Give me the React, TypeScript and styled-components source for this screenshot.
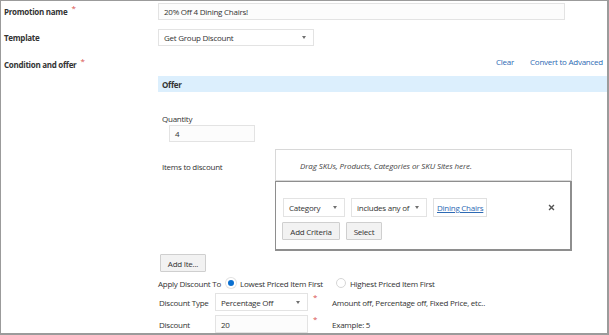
import React from "react";
import styled, { createGlobalStyle } from "styled-components";

const Global = createGlobalStyle`
  html, body { margin: 0; padding: 0; background: #fff; }
  body { font-family: "Open Sans", "Noto Sans", sans-serif; font-size: 8px; letter-spacing: -0.25px; color: #333; }
  * { box-sizing: border-box; }
`;

const Frame = styled.div`
  width: 609px;
  height: 335px;
  border: 1px solid #9b9b9b;
  border-right-width: 2px;
  border-bottom-width: 2px;
  overflow: hidden;
  padding: 2px 0 0 3px;
  display: flex;
  flex-direction: column;
`;

const FieldRow = styled.div<{ $mt?: number }>`
  display: grid;
  grid-template-columns: 154px 1fr;
  align-items: center;
  margin-top: ${(p) => p.$mt ?? 0}px;
`;

const Label = styled.div`
  font-weight: 700;
  font-size: 8px;
  letter-spacing: -0.28px;
  line-height: 12px;
  color: #333;
  white-space: nowrap;
`;

const Req = styled.span`
  color: #d9534f;
  font-weight: 400;
  font-size: 8px;
  position: relative;
  top: -4px;
  margin-left: 4px;
`;

const TextBox = styled.div<{ $w: number; $h?: number; $ml?: number }>`
  width: ${(p) => p.$w}px;
  height: ${(p) => p.$h ?? 17}px;
  margin-left: ${(p) => p.$ml ?? 0}px;
  border: 1px solid #e3e3e3;
  background: #fcfcfc;
  display: flex;
  align-items: center;
  padding-left: 5px;
  font-size: 8px;
  color: #333;
  white-space: nowrap;
  flex-shrink: 0;
`;

const Select = styled(TextBox)`
  justify-content: space-between;
  padding-right: 7px;
  background: #fff;
`;

const Caret = styled.span`
  width: 0;
  height: 0;
  border-left: 2.5px solid transparent;
  border-right: 2.5px solid transparent;
  border-top: 3.5px solid #707070;
  flex-shrink: 0;
`;

const ConditionRow = styled.div`
  display: grid;
  grid-template-columns: 154px 1fr;
  margin-top: 10px;
`;

const CondLabel = styled(Label)`
  padding-top: 3px;
`;

const Links = styled.div`
  display: flex;
  justify-content: flex-end;
  gap: 16px;
  padding-right: 4px;
  height: 12px;
  line-height: 12px;
  font-size: 8px;
`;

const Link = styled.a`
  color: #2d6ab4;
  text-decoration: none;
`;

const OfferBar = styled.div`
  margin-top: 8px;
  height: 16px;
  background: #dceffd;
  display: flex;
  align-items: center;
  padding-left: 4px;
  font-weight: 700;
  font-size: 8px;
`;

const OfferBody = styled.div`
  display: flex;
  flex-direction: column;
  align-items: flex-start;
`;

const SubLabel = styled.div<{ $ml?: number; $mt?: number }>`
  font-size: 8px;
  line-height: 12px;
  margin-left: ${(p) => p.$ml ?? 0}px;
  margin-top: ${(p) => p.$mt ?? 0}px;
  white-space: nowrap;
  color: #333;
`;

const ItemsGrid = styled.div`
  display: grid;
  grid-template-columns: 117px 297px;
  margin-top: 7px;
`;

const ItemsLabel = styled(SubLabel)`
  padding-top: 12px;
`;

const DropZone = styled.div`
  height: 32px;
  border: 1px solid #d8d8d8;
  display: flex;
  align-items: center;
  padding-left: 24px;
  font-style: italic;
  font-size: 8px;
  letter-spacing: -0.1px;
  color: #444;
`;

const CriteriaBox = styled.div`
  grid-column: 2;
  height: 70px;
  border: 1px solid #8e8e8e;
  border-width: 1px 2px 2px 1px;
  padding: 16px 0 0 7px;
  display: flex;
  flex-direction: column;
  gap: 5px;
`;

const CritRow = styled.div<{ $gap: number }>`
  display: flex;
  align-items: center;
  gap: ${(p) => p.$gap}px;
`;

const Chip = styled.div`
  height: 19px;
  border: 1px solid #e0e0e0;
  padding: 0 3px 0 3px;
  display: flex;
  align-items: center;
  font-size: 8px;
`;

const ChipLink = styled.span`
  color: #2d6ab4;
  text-decoration: underline;
`;

const Close = styled.svg`
  margin-left: auto;
  margin-right: 15px;
  width: 7px;
  height: 7px;
`;

const Button = styled.button<{ $w: number; $ml?: number; $mt?: number }>`
  width: ${(p) => p.$w}px;
  height: 18px;
  margin-left: ${(p) => p.$ml ?? 0}px;
  margin-top: ${(p) => p.$mt ?? 0}px;
  border: 1px solid #cfcfcf;
  border-radius: 1px;
  background: #f2f2f2;
  font-family: inherit;
  font-size: 8px;
  letter-spacing: -0.25px;
  color: #333;
  padding: 0;
  white-space: nowrap;
`;

const ApplyRow = styled.div`
  display: flex;
  align-items: center;
  height: 12px;
  margin-top: 5px;
  font-size: 8px;
  white-space: nowrap;
`;

const Radio = styled.span<{ $on?: boolean; $ml: number }>`
  width: 10px;
  height: 10px;
  border-radius: 50%;
  border: ${(p) => (p.$on ? "2px solid #fff" : "1px solid #d6d6d6")};
  background: ${(p) => (p.$on ? "#0a6fd0" : "#fff")};
  box-shadow: ${(p) => (p.$on ? "0 0 0 1px #e2e2e2" : "none")};
  margin-left: ${(p) => p.$ml}px;
  margin-right: 4px;
  flex-shrink: 0;
`;

const DiscRow = styled.div<{ $mt: number }>`
  display: grid;
  grid-template-columns: 56px 93px 24px auto;
  align-items: center;
  margin-top: ${(p) => p.$mt}px;
  margin-left: 1px;
  white-space: nowrap;
`;

const DiscReq = styled.span`
  color: #d9534f;
  font-size: 8px;
  align-self: start;
  padding-left: 5px;
  margin-top: -2px;
`;

export default function App() {
  return (
    <>
      <Global />
      <Frame>
        <FieldRow>
          <Label>
            Promotion name<Req>*</Req>
          </Label>
          <TextBox $w={407}>20% Off 4 Dining Chairs!</TextBox>
        </FieldRow>
        <FieldRow $mt={9}>
          <Label>Template</Label>
          <Select $w={156}>
            Get Group Discount <Caret />
          </Select>
        </FieldRow>
        <ConditionRow>
          <CondLabel>
            Condition and offer<Req>*</Req>
          </CondLabel>
          <div>
            <Links>
              <Link>Clear</Link>
              <Link>Convert to Advanced</Link>
            </Links>
            <OfferBar>Offer</OfferBar>
            <OfferBody>
              <SubLabel $ml={4} $mt={21}>Quantity</SubLabel>
              <TextBox $w={86} $ml={11}>4</TextBox>
              <ItemsGrid>
                <ItemsLabel $ml={4}>Items to discount</ItemsLabel>
                <DropZone>Drag SKUs, Products, Categories or SKU Sites here.</DropZone>
                <CriteriaBox>
                  <CritRow $gap={6}>
                    <Select $w={62} $h={19}>
                      Category <Caret />
                    </Select>
                    <Select $w={76} $h={19}>
                      includes any of <Caret />
                    </Select>
                    <Chip>
                      <ChipLink>Dining Chairs</ChipLink>
                    </Chip>
                    <Close viewBox="0 0 10 10">
                      <path d="M1.5 1.5 L8.5 8.5 M8.5 1.5 L1.5 8.5" stroke="#555" strokeWidth="2" />
                    </Close>
                  </CritRow>
                  <CritRow $gap={6}>
                    <Button $w={58} $ml={-1}>Add Criteria</Button>
                    <Button $w={36}>Select</Button>
                  </CritRow>
                </CriteriaBox>
              </ItemsGrid>
              <Button $w={46} $ml={2} $mt={3}>Add Ite...</Button>
              <ApplyRow>
                Apply Discount To
                <Radio $on $ml={5} />
                Lowest Priced Item First
                <Radio $ml={13} />
                Highest Priced Item First
              </ApplyRow>
              <DiscRow $mt={4}>
                <span>Discount Type</span>
                <Select $w={93} $h={18}>
                  Percentage Off <Caret />
                </Select>
                <DiscReq>*</DiscReq>
                <span>Amount off, Percentage off, Fixed Price, etc..</span>
              </DiscRow>
              <DiscRow $mt={4}>
                <span>Discount</span>
                <TextBox $w={93} $h={18}>20</TextBox>
                <DiscReq>*</DiscReq>
                <span>Example: 5</span>
              </DiscRow>
            </OfferBody>
          </div>
        </ConditionRow>
      </Frame>
    </>
  );
}
